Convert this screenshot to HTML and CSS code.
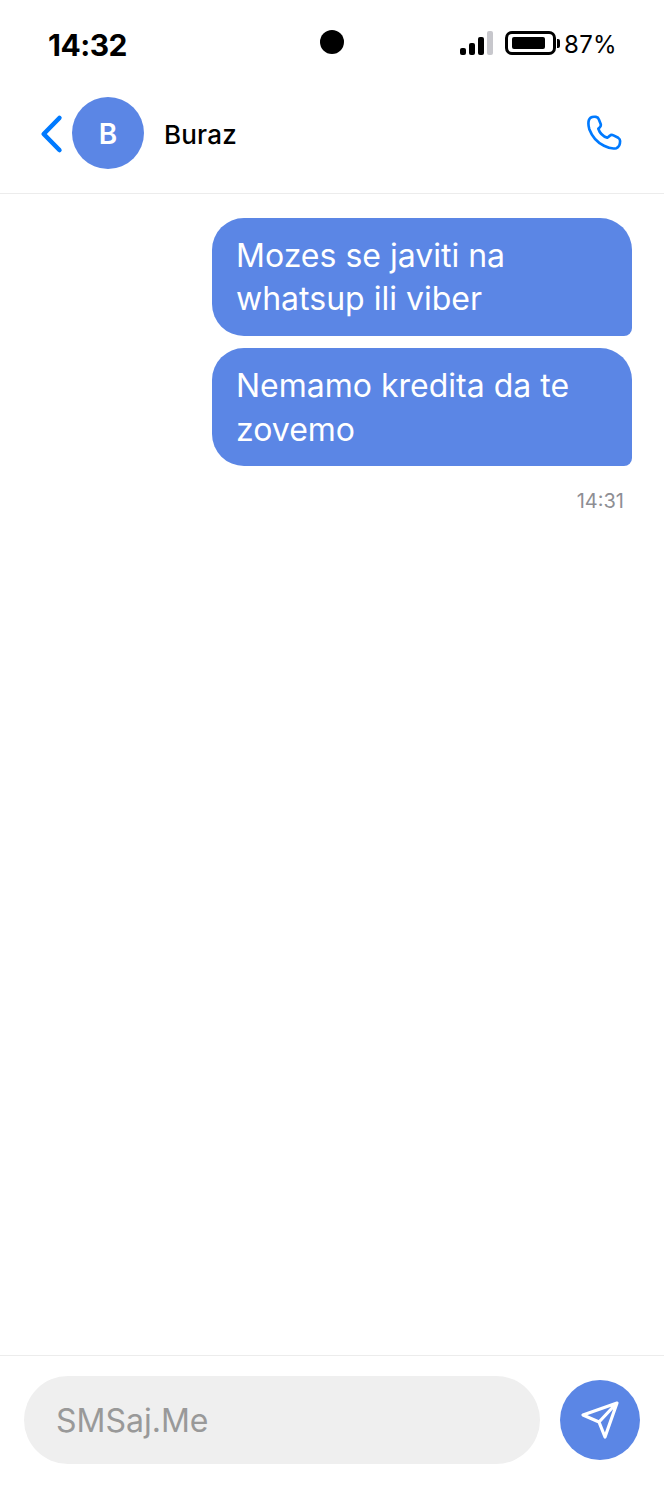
FILE: index.html
```html
<!DOCTYPE html>
<html lang="en">
<head>
  <meta charset="UTF-8" />
  <meta name="viewport" content="width=device-width, initial-scale=1.0"/>
  <title>Buraz</title>
  <link rel="stylesheet" href="styles.css">
</head>
<body>

<div class="app">

  <div class="status">
    <span class="clock">14:32</span>
    <span class="camera"></span>
    <div class="status-right">
      <div class="signal">
        <span class="bar bar1"></span>
        <span class="bar bar2"></span>
        <span class="bar bar3"></span>
        <span class="bar bar4"></span>
      </div>
      <div class="battery"><span class="battery-fill"></span></div>
      <span class="battery-nub"></span>
      <span class="percent">87%</span>
    </div>
  </div>

  <header class="top">
    <svg class="back" width="26" height="40" viewBox="0 0 26 40">
      <path d="M22.4 4 L6.7 20 L22.4 36" fill="none" stroke="#007aff" stroke-width="4.6" stroke-linecap="round" stroke-linejoin="round"/>
    </svg>
    <div class="avatar">B</div>
    <div class="name">Buraz</div>
    <svg class="phone" width="36" height="36" viewBox="0 0 38 38">
      <path d="M3 5.5 C4 2.5 7 1.5 10.5 2 C12 2.2 13 3 13.5 4.5 L15.5 9.5 C16 11 15.5 12 14.5 13 L13 14.5 C14.5 19 18 22.5 22.5 24 L25 22 C26 21 27.5 20.8 29 21.5 L34 24 C35.5 25 36 26 36 27.5 C36 31 35 34 32 35 C28.5 36 24 35 19 32.5 C12 29 6.5 23 3.5 15 C2.5 11.5 2.3 8 3 5.5 Z" fill="none" stroke="#007aff" stroke-width="2.8" stroke-linejoin="round"/>
    </svg>
  </header>

  <main class="thread">
    <div class="bubble">Mozes se javiti na whatsup ili viber</div>
    <div class="bubble">Nemamo kredita da te zovemo</div>
    <div class="time">14:31</div>
  </main>

  <footer class="composer">
    <div class="field">SMSaj.Me</div>
    <div class="send">
      <svg width="40" height="40" viewBox="0 0 40 40">
        <path d="M37 3 L3 15 L19 22 L25 37 Z M19 22 L34 6" fill="none" stroke="#fff" stroke-width="3.2" stroke-linecap="round" stroke-linejoin="round"/>
      </svg>
    </div>
  </footer>

</div>

</body>
</html>
```

FILE: styles.css
```css
:root {
  --primary: #5b86e5;
  --blue: #007aff;
  --line: #ececec;
}
* {
  box-sizing: border-box;
}
body {
  margin: 0;
  font-family: Inter, 'Noto Sans', sans-serif;
  background: #fff;
  color: #000;
}
.app {
  display: flex;
  flex-direction: column;
  height: 1504px;
}
.status {
  display: grid;
  grid-template-columns: 1fr 24px 1fr;
  align-items: center;
  height: 84px;
  padding: 0 48px;
}
.clock {
  font-size: 30px;
  font-weight: 700;
  line-height: 40px;
  letter-spacing: -0.5px;
  margin-top: 6px;
}
.camera {
  width: 24px;
  height: 24px;
  border-radius: 50%;
  background: #000;
}
.status-right {
  display: flex;
  align-items: center;
  justify-content: flex-end;
  margin-top: 2px;
  margin-right: -1px;
}
.signal {
  display: flex;
  align-items: flex-end;
  gap: 3px;
  height: 24px;
  margin-right: 12px;
}
.bar {
  width: 6px;
  border-radius: 2px;
  background: #000;
}
.bar1 { height: 7px; }
.bar2 { height: 12px; }
.bar3 { height: 18px; }
.bar4 { height: 24px; background: #c7c7cc; }
.battery {
  width: 51px;
  height: 24px;
  border: 3px solid #000;
  border-radius: 7px;
  padding: 3px 4px;
}
.battery-fill {
  display: block;
  width: 33px;
  height: 12px;
  border-radius: 2px;
  background: #000;
}
.battery-nub {
  width: 3px;
  height: 9px;
  margin-left: 1px;
  margin-right: 4px;
  border-radius: 0 2px 2px 0;
  background: #000;
}
.percent {
  margin-top: 4px;
  font-size: 24px;
  line-height: 30px;
  letter-spacing: 0.3px;
}
.top {
  display: flex;
  align-items: center;
  height: 110px;
  padding: 0 42px 11px 37px;
  border-bottom: 1px solid var(--line);
}
.back {
  flex: none;
  margin-right: 9px;
  margin-top: 1px;
}
.avatar {
  display: flex;
  align-items: center;
  justify-content: center;
  flex: none;
  width: 72px;
  height: 72px;
  padding-top: 2px;
  border-radius: 50%;
  background: var(--primary);
  color: #fff;
  font-size: 28px;
  font-weight: 600;
}
.name {
  flex: 1;
  margin-top: 2px;
  margin-left: 20px;
  font-size: 26px;
  font-weight: 500;
  letter-spacing: 0.2px;
}
.phone {
  flex: none;
}
.thread {
  flex: 1;
  display: flex;
  flex-direction: column;
  align-items: flex-end;
  gap: 12.49px;
  padding: 24px 32px 0;
}
.bubble {
  width: 420px;
  padding: 16px 24px 15.6px;
  border-radius: 32px 32px 8px 32px;
  background: var(--primary);
  color: #fff;
  font-size: 32px;
  line-height: 43.2px;
}
.time {
  margin-top: 7.6px;
  padding-right: 8px;
  font-size: 20px;
  line-height: 28px;
  color: #8e8e93;
}
.composer {
  display: flex;
  align-items: center;
  gap: 20px;
  height: 149px;
  padding: 20px 24px 40px;
  border-top: 1px solid var(--line);
}
.field {
  flex: 1;
  height: 88px;
  padding: 0 32px;
  border-radius: 44px;
  background: #efefef;
  color: #999;
  font-size: 32px;
  line-height: 90px;
}
.send {
  display: flex;
  align-items: center;
  justify-content: center;
  flex: none;
  width: 80px;
  height: 80px;
  border-radius: 50%;
  background: var(--primary);
}
```
